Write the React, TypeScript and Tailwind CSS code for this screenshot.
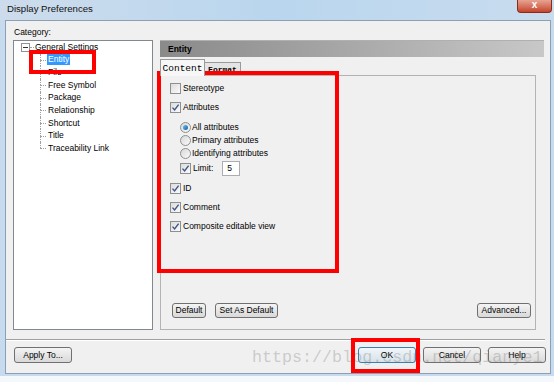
import React from "react";

const treeItems = ["Entity", "File", "Free Symbol", "Package", "Relationship", "Shortcut", "Title", "Traceability Link"];

function CheckBox({ checked }: { checked?: boolean }) {
  return (
    <div className="w-[11px] h-[11px] border border-[#8e8f8f] bg-gradient-to-br from-[#dcdcdc] to-[#fbfbfb] flex items-center justify-center shrink-0">
      {checked && (
        <svg width="9" height="9" viewBox="0 0 9 9">
          <path d="M1.5 4.6 L3.6 7 L7.6 1.6" fill="none" stroke="#3f5586" strokeWidth="1.4" />
        </svg>
      )}
    </div>
  );
}

function Radio({ checked }: { checked?: boolean }) {
  return (
    <div className="w-[11px] h-[11px] rounded-full border border-[#8e8f8f] bg-gradient-to-br from-[#d8d8d8] to-[#fafafa] flex items-center justify-center shrink-0">
      {checked && <div className="w-[5px] h-[5px] rounded-full bg-gradient-to-br from-[#6cc0f0] to-[#0f5ea8]" />}
    </div>
  );
}

function CheckRow({ label, checked, className = "" }: { label: string; checked?: boolean; className?: string }) {
  return (
    <div className={`flex items-center h-[12px] pl-[9px] ${className}`}>
      <CheckBox checked={checked} />
      <span className="ml-[2px]">{label}</span>
    </div>
  );
}

function RadioRow({ label, checked }: { label: string; checked?: boolean }) {
  return (
    <div className="flex items-center h-[13px]">
      <Radio checked={checked} />
      <span className="ml-[1px]">{label}</span>
    </div>
  );
}

function Btn({ label, w, primary }: { label: string; w: string; primary?: boolean }) {
  return (
    <div
      className={`${w} flex items-center justify-center rounded-[3px] border ${
        primary
          ? "border-[#3c7fb1] bg-gradient-to-b from-[#f1f6fa] to-[#d6e2ea]"
          : "border-[#707070] bg-gradient-to-b from-[#f4f4f4] to-[#d9d9d9]"
      }`}
    >
      {label}
    </div>
  );
}

export default function App() {
  return (
    <div className="relative w-[554px] h-[382px] overflow-hidden bg-[#c7dbee] flex flex-col font-['Liberation_Sans',Arial,sans-serif] text-[8.5px] leading-[11px] text-black">
      {/* title bar */}
      <div className="h-[20px] flex items-start bg-gradient-to-r from-[#cddcec] via-[#b9d6ee] to-[#c9dcee]">
        <span className="pl-[7px] pt-[3px] text-[9.6px] leading-[12px] text-[#111]">Display Preferences</span>
        <div className="ml-auto mr-[2px] w-[35px] h-[13px] rounded-b-[4px] border border-t-0 border-[#8a2a1a] bg-gradient-to-b from-[#e7a393] to-[#c3432a] flex items-center justify-center">
          <span className="text-white font-bold text-[10px] leading-[10px] -mt-[2px]">x</span>
        </div>
      </div>

      {/* window body */}
      <div className="h-[356px] flex">
        <div className="w-[5px]" />
        <div className="w-[546px] h-[354px] border border-[#8f9fb3] bg-[#f0f0f0] flex flex-col">
          <div className="h-[19px] pl-[8px] pt-[6px]">Category:</div>

          <div className="h-[290px] flex ml-[7px]">
            {/* tree */}
            <div className="w-[140px] border border-[#828790] bg-white flex flex-col">
              <div className="h-[12.625px] flex items-center pl-[7px]">
                <div className="w-[9px] h-[9px] border border-[#919191] bg-white flex items-center justify-center">
                  <div className="w-[5px] h-px bg-[#333]" />
                </div>
                <div className="w-[4px] border-t border-dotted border-[#a0a0a0]" />
                <span className="ml-[1px]">General Settings</span>
              </div>
              {treeItems.map((t, i) => (
                <div key={t} className="h-[12.625px] flex items-center pl-[26px]">
                  <div className="w-[6px] h-full flex flex-col">
                    <div className="h-1/2 border-l border-dotted border-[#a0a0a0]" />
                    <div
                      className={`h-1/2 border-t border-dotted border-[#a0a0a0] ${
                        i < treeItems.length - 1 ? "border-l" : ""
                      }`}
                    />
                  </div>
                  {i === 0 ? (
                    <span className="ml-[1px] px-[1px] bg-[#3399ff] text-white">{t}</span>
                  ) : (
                    <span className="ml-[2px]">{t}</span>
                  )}
                </div>
              ))}
            </div>

            {/* right side */}
            <div className="w-[384px] ml-[7px] flex flex-col">
              <div className="h-[17px] flex items-center pl-[8px] font-bold bg-gradient-to-r from-[#8a8a8a] to-[#c8c8c8] border-t border-[#b0b0b0]">
                Entity
              </div>
              <div className="h-[18px] flex items-end">
                <div className="w-[45px] h-[17px] -mb-px z-10 border border-b-0 border-[#9a9a9a] bg-[#f7f7f7] flex items-center justify-center font-['Liberation_Mono',monospace] text-[9.5px]">
                  Content
                </div>
                <div className="w-[36px] h-[13px] border border-b-0 border-l-0 border-[#9a9a9a] bg-[#e4e4e4] flex items-center justify-center font-['Liberation_Mono',monospace] font-bold text-[8px]">
                  Format
                </div>
              </div>
              <div className="w-[376px] flex-1 border border-[#b3b3b3] bg-[#f0f0f0] flex flex-col pt-[6px]">
                <CheckRow label="Stereotype" />
                <CheckRow label="Attributes" checked className="mt-[7px]" />
                <div className="pl-[19px] mt-[8px] flex flex-col">
                  <RadioRow label="All attributes" checked />
                  <RadioRow label="Primary attributes" />
                  <RadioRow label="Identifying attributes" />
                  <div className="h-[16px] flex items-center">
                    <CheckBox checked />
                    <span className="ml-[2px]">Limit:</span>
                    <div className="ml-[9px] w-[18px] h-[15px] border border-[#abadb3] bg-white flex items-center pl-[4px]">5</div>
                  </div>
                </div>
                <CheckRow label="ID" checked className="mt-[6px]" />
                <CheckRow label="Comment" checked className="mt-[7px]" />
                <CheckRow label="Composite editable view" checked className="mt-[7px]" />

                <div className="mt-auto mb-[11px] h-[15px] flex pl-[11px] pr-[4px]">
                  <Btn label="Default" w="w-[34px]" />
                  <div className="ml-[9px] flex">
                    <Btn label="Set As Default" w="w-[63px]" />
                  </div>
                  <div className="ml-auto flex">
                    <Btn label="Advanced..." w="w-[54px]" />
                  </div>
                </div>
              </div>
            </div>
          </div>

          <div className="mt-[9px] mr-[5px] h-[2px] border-t border-[#a0a0a0] border-b border-b-white" />

          <div className="mt-[6px] h-[16px] flex pl-[8px] pr-[4px]">
            <Btn label="Apply To..." w="w-[58px]" />
            <div className="ml-auto flex gap-[7px]">
              <Btn label="OK" w="w-[58px]" primary />
              <Btn label="Cancel" w="w-[58px]" />
              <Btn label="Help" w="w-[58px]" />
            </div>
          </div>
        </div>
      </div>

      <div className="h-[6px] bg-[#f4f8fb]" />

      {/* watermark */}
      <div className="absolute left-[252px] top-[349px] font-['Liberation_Mono',monospace] text-[16.7px] leading-[17px] text-[rgba(110,110,110,0.3)] pointer-events-none">
        https://blog.csdn.net/qianye1
      </div>

      {/* red annotation boxes */}
      <div className="absolute left-[29px] top-[50px] w-[67px] h-[24px] border-[4px] border-[#ff0000]" />
      <div className="absolute left-[157px] top-[71px] w-[182px] h-[202px] border-[4px] border-[#ff0000]" />
      <div className="absolute left-[351px] top-[338px] w-[69px] h-[35px] border-[4px] border-[#ff0000]" />
    </div>
  );
}
